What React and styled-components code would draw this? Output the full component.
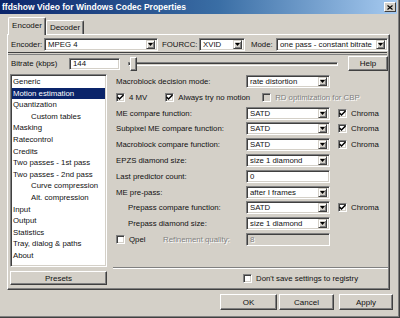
import React from 'react';
import styled, { createGlobalStyle } from 'styled-components';

const GlobalStyle = createGlobalStyle`
    html, body {
        margin: 0;
        padding: 0;
        background: #d4d0c8;
    }
    body {
        font-family: "Liberation Sans", Arial, sans-serif;
        font-size: 7.8px;
        color: #111;
    }
`;

// window chrome
const Window = styled.div`
    width: 400px;
    height: 318px;
    box-sizing: border-box;
    background: #d4d0c8;
    border-right: 1px solid #404040;
    border-bottom: 1px solid #404040;
    box-shadow: inset -1px -1px #808080;
    display: flex;
    flex-direction: column;
    overflow: hidden;
`;

const TitleBar = styled.div`
    height: 14px;
    width: 397px;
    flex: none;
    background: linear-gradient(to right, #0a246a 0%, #3a6ea5 55%, #a6caf0 100%);
    display: flex;
    align-items: center;
    justify-content: space-between;
    padding: 0 1px 0 2px;
    box-sizing: border-box;
`;

const TitleText = styled.span`
    color: #fff;
    font-weight: bold;
    font-size: 8.5px;
    white-space: nowrap;
`;

const CloseButton = styled.div`
    width: 12px;
    height: 10px;
    box-sizing: border-box;
    background: #d4d0c8;
    border-top: 1px solid #fff;
    border-left: 1px solid #fff;
    border-right: 1px solid #404040;
    border-bottom: 1px solid #404040;
    display: flex;
    align-items: center;
    justify-content: center;
`;

// tabs
const TabStrip = styled.div`
    height: 20px;
    flex: none;
    display: flex;
    align-items: flex-end;
    padding-left: 8px;
    position: relative;
    z-index: 1;
`;

const Tab = styled.div`
    box-sizing: border-box;
    width: 38px;
    height: ${(p) => (p.$active ? 18 : 14)}px;
    margin-bottom: ${(p) => (p.$active ? -1 : 0)}px;
    background: #d4d0c8;
    border-top: 1px solid #fff;
    border-left: 1px solid #fff;
    border-right: 1px solid #404040;
    box-shadow: inset -1px 0 #808080;
    border-radius: 2px 2px 0 0;
    display: flex;
    justify-content: center;
    padding-top: ${(p) => (p.$active ? 3 : 2)}px;
    font-size: 8px;
`;

const Panel = styled.div`
    margin-left: 7px;
    width: 383px;
    height: 256px;
    flex: none;
    box-sizing: border-box;
    border-top: 1px solid #fff;
    border-left: 1px solid #fff;
    border-right: 1px solid #404040;
    border-bottom: 1px solid #404040;
    box-shadow: inset -1px -1px #808080;
    display: flex;
    flex-direction: column;
`;

// top rows
const EncoderRow = styled.div`
    margin-top: 2px;
    height: 14px;
    padding-left: 3px;
    display: flex;
    align-items: center;
`;

const Label = styled.span`
    width: ${(p) => p.$w}px;
    margin-left: ${(p) => p.$ml || 0}px;
    padding-left: ${(p) => (p.$indent ? 12 : 0)}px;
    box-sizing: border-box;
    flex: none;
    white-space: nowrap;
    color: ${(p) => (p.$disabled ? '#808080' : 'inherit')};
    text-shadow: ${(p) => (p.$disabled ? '1px 1px #fff' : 'none')};
`;

const Divider = styled.div`
    margin-top: 1px;
    margin-right: 2px;
    height: 1px;
    border-top: 1px solid #404040;
    border-bottom: 1px solid #808080;
`;

const BitrateRow = styled.div`
    height: 17px;
    padding-left: 3px;
    display: flex;
    align-items: center;
`;

const SliderWrap = styled.div`
    width: 210px;
    height: 15px;
    margin-left: 8px;
    position: relative;
    display: flex;
    align-items: center;
`;

const SliderTrack = styled.div`
    width: 100%;
    height: 2px;
    border-top: 1px solid #808080;
    border-left: 1px solid #808080;
    border-bottom: 1px solid #fff;
    border-right: 1px solid #fff;
    box-shadow: inset 1px 1px #404040;
`;

const SliderThumb = styled.div`
    position: absolute;
    left: 2px;
    top: 1px;
    width: 7px;
    height: 14px;
    box-sizing: border-box;
    background: #d4d0c8;
    border-top: 1px solid #fff;
    border-left: 1px solid #fff;
    border-right: 1px solid #404040;
    border-bottom: 1px solid #404040;
    box-shadow: inset -1px -1px #808080;
`;

// controls
const Sunken = styled.div`
    box-sizing: border-box;
    width: ${(p) => p.$w}px;
    height: ${(p) => p.$h || 13}px;
    margin-left: ${(p) => p.$ml || 0}px;
    flex: none;
    background: ${(p) => (p.$disabled ? '#d4d0c8' : '#fff')};
    color: ${(p) => (p.$disabled ? '#808080' : 'inherit')};
    text-shadow: ${(p) => (p.$disabled ? '1px 1px #fff' : 'none')};
    border-top: 1px solid #808080;
    border-left: 1px solid #808080;
    border-right: 1px solid #fff;
    border-bottom: 1px solid #fff;
    box-shadow: inset 1px 1px #404040, inset -1px -1px #d4d0c8;
    display: flex;
    align-items: center;
    padding: 0 2px 0 3px;
    white-space: nowrap;
    overflow: hidden;
`;

const SelectText = styled.span`
    flex: 1;
    overflow: hidden;
`;

const ArrowButton = styled.div`
    width: 9px;
    height: 9px;
    flex: none;
    box-sizing: border-box;
    background: #d4d0c8;
    border-top: 1px solid #d4d0c8;
    border-left: 1px solid #d4d0c8;
    border-right: 1px solid #404040;
    border-bottom: 1px solid #404040;
    box-shadow: inset 1px 1px #fff, inset -1px -1px #808080;
    display: flex;
    align-items: center;
    justify-content: center;
`;

const Button = styled.div`
    box-sizing: border-box;
    width: ${(p) => p.$w}px;
    height: ${(p) => p.$h || 15}px;
    margin-left: ${(p) => p.$ml || 0}px;
    flex: none;
    background: #d4d0c8;
    border-top: 1px solid #fff;
    border-left: 1px solid #fff;
    border-right: 1px solid #404040;
    border-bottom: 1px solid #404040;
    box-shadow: inset -1px -1px #808080;
    display: flex;
    align-items: center;
    justify-content: center;
    font-size: 8px;
`;

const CheckBox = styled.div`
    width: 9px;
    height: 9px;
    flex: none;
    box-sizing: border-box;
    background: ${(p) => (p.$disabled ? '#d4d0c8' : '#fff')};
    border-top: 1px solid #808080;
    border-left: 1px solid #808080;
    border-right: 1px solid #fff;
    border-bottom: 1px solid #fff;
    box-shadow: inset 1px 1px #404040, inset -1px -1px #d4d0c8;
    display: flex;
    align-items: center;
    justify-content: center;
`;

const CheckItem = styled.div`
    display: flex;
    align-items: center;
    gap: 4px;
    flex: none;
    margin-left: ${(p) => p.$ml || 0}px;
    white-space: nowrap;
    color: ${(p) => (p.$disabled ? '#808080' : 'inherit')};
    text-shadow: ${(p) => (p.$disabled ? '1px 1px #fff' : 'none')};
`;

// main area
const Main = styled.div`
    display: flex;
    padding: 2px 0 0 2px;
`;

const LeftCol = styled.div`
    width: 97px;
    flex: none;
    display: flex;
    flex-direction: column;
    gap: 4px;
`;

const TreeList = styled.div`
    height: 193px;
    box-sizing: border-box;
    background: #fff;
    border-top: 1px solid #808080;
    border-left: 1px solid #808080;
    border-right: 1px solid #fff;
    border-bottom: 1px solid #fff;
    box-shadow: inset 1px 1px #404040, inset -1px -1px #d4d0c8;
    padding: 1px 1px 0 1px;
`;

const TreeItem = styled.div`
    height: 11.6px;
    line-height: 11.6px;
    padding-left: ${(p) => (p.$indent ? 19 : 1)}px;
    background: ${(p) => (p.$selected ? '#0a246a' : 'transparent')};
    color: ${(p) => (p.$selected ? '#fff' : 'inherit')};
    white-space: nowrap;
`;

const RightCol = styled.div`
    margin-left: 6px;
    width: 275px;
    flex: none;
    padding-top: 1px;
    display: flex;
    flex-direction: column;
`;

const Form = styled.div`
    display: flex;
    flex-direction: column;
    gap: 2.8px;
    padding-left: 3px;
`;

const FormRow = styled.div`
    height: 13px;
    display: flex;
    align-items: center;
`;

const Etched = styled.div`
    margin-top: 21px;
    height: 0;
    border-top: 1px solid #808080;
    border-bottom: 1px solid #fff;
`;

const RegistryRow = styled.div`
    margin-top: 5px;
    padding-left: 130px;
    display: flex;
`;

const Footer = styled.div`
    display: flex;
    justify-content: flex-end;
    padding: 4px 6px 0 0;
`;

const Arrow = () => (
    <svg width="5" height="3" viewBox="0 0 5 3">
        <path d="M0 0H5L2.5 3Z" fill="#000" />
    </svg>
);

const Check = () => (
    <svg width="7" height="7" viewBox="0 0 7 7">
        <path d="M0.5 3 L2.5 5 L6.5 1" fill="none" stroke="#000" strokeWidth="1.5" />
    </svg>
);

const Select = ({ w, value, ml }) => (
    <Sunken $w={w} $ml={ml}>
        <SelectText>{value}</SelectText>
        <ArrowButton>
            <Arrow />
        </ArrowButton>
    </Sunken>
);

const Check1 = ({ label, checked, disabled, ml }) => (
    <CheckItem $ml={ml} $disabled={disabled}>
        <CheckBox $disabled={disabled}>{checked && <Check />}</CheckBox>
        {label && <span>{label}</span>}
    </CheckItem>
);

const treeItems = [
    { name: 'Generic' },
    { name: 'Motion estimation', selected: true },
    { name: 'Quantization' },
    { name: 'Custom tables', indent: true },
    { name: 'Masking' },
    { name: 'Ratecontrol' },
    { name: 'Credits' },
    { name: 'Two passes - 1st pass' },
    { name: 'Two passes - 2nd pass' },
    { name: 'Curve compression', indent: true },
    { name: 'Alt. compression', indent: true },
    { name: 'Input' },
    { name: 'Output' },
    { name: 'Statistics' },
    { name: 'Tray, dialog & paths' },
    { name: 'About' },
];

const compareRows = [
    { label: 'ME compare function:', value: 'SATD', chroma: true },
    { label: 'Subpixel ME compare function:', value: 'SATD', chroma: true },
    { label: 'Macroblock compare function:', value: 'SATD', chroma: true },
    { label: 'EPZS diamond size:', value: 'size 1 diamond' },
];

const SelectRow = ({ label, value, chroma, indent }) => (
    <FormRow>
        <Label $w={130} $indent={indent}>{label}</Label>
        <Select w={84} value={value} />
        {chroma && <Check1 label="Chroma" checked ml={8} />}
    </FormRow>
);

const App = () => (
    <>
        <GlobalStyle />
        <Window>
            <TitleBar>
                <TitleText>ffdshow Video for Windows Codec Properties</TitleText>
                <CloseButton>
                    <svg width="6" height="5" viewBox="0 0 6 5">
                        <path d="M0.5 0.5L5.5 4.5M5.5 0.5L0.5 4.5" stroke="#000" strokeWidth="1.1" />
                    </svg>
                </CloseButton>
            </TitleBar>

            <TabStrip>
                <Tab $active>Encoder</Tab>
                <Tab>Decoder</Tab>
            </TabStrip>

            <Panel>
                <EncoderRow>
                    <Label $w={33}>Encoder:</Label>
                    <Select w={114} value="MPEG 4" />
                    <Label $w={37} $ml={4}>FOURCC:</Label>
                    <Select w={46} value="XVID" />
                    <Label $w={25} $ml={6}>Mode:</Label>
                    <Select w={112} value="one pass - constant bitrate" />
                </EncoderRow>
                <Divider />
                <BitrateRow>
                    <Label $w={58}>Bitrate (kbps)</Label>
                    <Sunken $w={51} $h={12}>144</Sunken>
                    <SliderWrap>
                        <SliderTrack />
                        <SliderThumb />
                    </SliderWrap>
                    <Button $w={40} $ml={10}>Help</Button>
                </BitrateRow>

                <Main>
                    <LeftCol>
                        <TreeList>
                            {treeItems.map((item) => (
                                <TreeItem
                                    key={item.name}
                                    $indent={item.indent}
                                    $selected={item.selected}
                                >
                                    {item.name}
                                </TreeItem>
                            ))}
                        </TreeList>
                        <Button $w={97} $h={14}>Presets</Button>
                    </LeftCol>

                    <RightCol>
                        <Form>
                            <SelectRow label="Macroblock decision mode:" value="rate distortion" />

                            <FormRow>
                                <Check1 label="4 MV" checked />
                                <Check1 label="Always try no motion" checked ml={18} />
                                <Check1 label="RD optimization for CBP" disabled ml={12} />
                            </FormRow>

                            {compareRows.map((row) => (
                                <SelectRow key={row.label} {...row} />
                            ))}

                            <FormRow>
                                <Label $w={130}>Last predictor count:</Label>
                                <Sunken $w={84}>0</Sunken>
                            </FormRow>

                            <SelectRow label="ME pre-pass:" value="after I frames" />
                            <SelectRow label="Prepass compare function:" value="SATD" chroma indent />
                            <SelectRow label="Prepass diamond size:" value="size 1 diamond" indent />

                            <FormRow>
                                <Label $w={47}>
                                    <Check1 label="Qpel" />
                                </Label>
                                <Label $w={83} $disabled>Refinement quality:</Label>
                                <Sunken $w={84} $disabled>8</Sunken>
                            </FormRow>
                        </Form>
                        <Etched />
                        <RegistryRow>
                            <Check1 label="Don't save settings to registry" />
                        </RegistryRow>
                    </RightCol>
                </Main>
            </Panel>

            <Footer>
                <Button $w={57} $h={16}>OK</Button>
                <Button $w={55} $h={16} $ml={2}>Cancel</Button>
                <Button $w={54} $h={16} $ml={5}>Apply</Button>
            </Footer>
        </Window>
    </>
);

export default App;
